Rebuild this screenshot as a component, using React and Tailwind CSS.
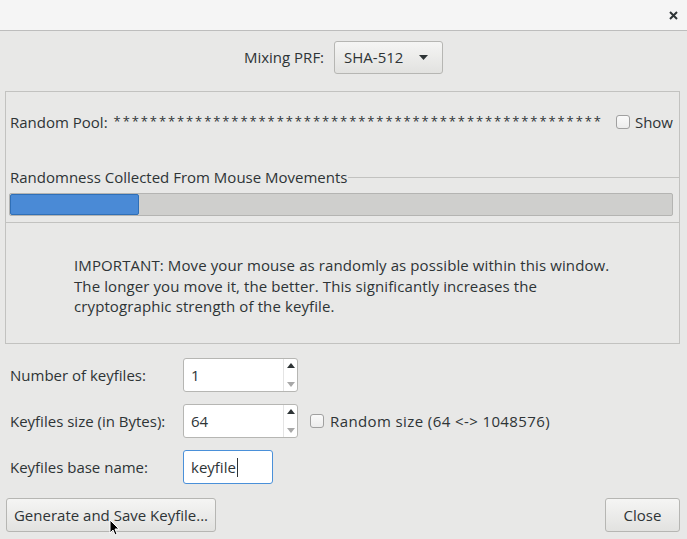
import React from "react";

const font = { fontFamily: '"Open Sans", "Noto Sans", sans-serif' };

const SpinBox = ({ value }) => (
    <div className="flex h-[34px] w-[115px] rounded-[3px] border border-[#b6b6b3] bg-white">
        <div className="flex flex-1 items-center pl-[7px] text-[15px]">{value}</div>
        <div className="flex w-[14px] flex-col items-center justify-between py-[4px] border-l border-[#e4e4e4]">
            <svg width="8" height="6" viewBox="0 0 8 6"><path d="M0 5 L4 0 L8 5 Z" fill="#2e3436" /></svg>
            <svg width="8" height="6" viewBox="0 0 8 6"><path d="M0 1 L4 6 L8 1 Z" fill="#a8a8a8" /></svg>
        </div>
    </div>
);

const CheckBox = () => (
    <div className="h-[14px] w-[14px] rounded-[3px] border border-[#a0a0a0] bg-gradient-to-b from-[#fafafa] to-[#ececec]" />
);

const Button = ({ children, className }) => (
    <div className={"flex h-[34px] items-center justify-center rounded-[3px] border border-[#b6b6b3] bg-gradient-to-b from-[#f5f5f4] to-[#e2e2e0] text-[15px] " + className}>
        {children}
    </div>
);

export default function App() {
    return (
        <div className="relative h-[539px] w-[687px] overflow-hidden bg-[#e8e8e7] text-[#2e3436]" style={font}>
            {/* title bar */}
            <div className="flex h-[31px] items-center justify-end border-b border-[#bdbdbd] bg-[#f5f5f5] pr-[9px]">
                <svg width="9" height="9" viewBox="0 0 9 9"><path d="M1 1 L8 8 M8 1 L1 8" stroke="#2e3436" strokeWidth="2" /></svg>
            </div>

            {/* mixing prf */}
            <div className="mt-[10px] flex items-center justify-center gap-[10px]">
                <span className="text-[15px]">Mixing PRF:</span>
                <div className="flex h-[33px] w-[109px] items-center justify-between rounded-[3px] border border-[#b6b6b3] bg-gradient-to-b from-[#f5f5f4] to-[#e2e2e0] pl-[9px] pr-[14px] text-[15px]">
                    <span>SHA-512</span>
                    <svg width="9" height="5" viewBox="0 0 9 5"><path d="M0 0 L9 0 L4.5 5 Z" fill="#2e3436" /></svg>
                </div>
            </div>

            {/* random pool frame */}
            <div className="ml-[5px] mr-[7px] mt-[17px] h-[253px] border border-[#c2c2c0]">
                <div className="mt-[19px] flex h-[22px] items-center pl-[4px] pr-[6px] text-[15px]">
                    <span>Random Pool:</span>
                    <span className="ml-[6px] flex-1 tracking-[1.9px] text-[13px]">
                        ******************************************************
                    </span>
                    <CheckBox />
                    <span className="ml-[5px]">Show</span>
                </div>

                <div className="mt-[34px]">
                    <div className="flex items-center">
                        <span className="pl-[4px] text-[15px] leading-[20px]">Randomness Collected From Mouse Movements</span>
                        <div className="h-px flex-1 bg-[#c2c2c0]" />
                    </div>
                    <div className="border-b border-[#c2c2c0] pb-[6px] pl-[3px] pr-[6px] pt-[6px]">
                        <div className="h-[23px] rounded-[2px] border border-[#b4b4b2] bg-[#cfcfcd]">
                            <div className="h-full w-[129px] rounded-[2px] border border-[#2f6fb7] bg-[#4a8ad6]" />
                        </div>
                    </div>
                </div>

                <div className="mt-[32px] pl-[68px] text-[15px] leading-[20.5px] tracking-[0.1px]">
                    <p>IMPORTANT: Move your mouse as randomly as possible within this window.</p>
                    <p>The longer you move it, the better. This significantly increases the</p>
                    <p>cryptographic strength of the keyfile.</p>
                </div>
            </div>

            {/* form */}
            <div className="mt-[14px] flex flex-col gap-[12px] pl-[10px] text-[15px]">
                <div className="flex items-center">
                    <span className="w-[173px]">Number of keyfiles:</span>
                    <SpinBox value="1" />
                </div>
                <div className="flex items-center">
                    <span className="w-[173px]">Keyfiles size (in Bytes):</span>
                    <SpinBox value="64" />
                    <div className="ml-[12px] flex items-center gap-[6px]">
                        <CheckBox />
                        <span className="tracking-[0.4px]">Random size (64 &lt;-&gt; 1048576)</span>
                    </div>
                </div>
                <div className="flex items-center">
                    <span className="w-[173px]">Keyfiles base name:</span>
                    <div className="flex h-[34px] w-[90px] items-center rounded-[3px] border border-[#4a90d9] bg-white pl-[7px]">
                        <span>keyfile</span>
                        <span className="ml-px h-[19px] w-px bg-[#2e3436]" />
                    </div>
                </div>
            </div>

            {/* buttons */}
            <div className="mt-[14px] flex items-center justify-between pl-[6px] pr-[7px]">
                <Button className="w-[210px]">Generate and Save Keyfile...</Button>
                <Button className="w-[75px]">Close</Button>
            </div>

            {/* mouse pointer */}
            <svg className="absolute left-[109px] top-[519px]" width="11" height="17" viewBox="0 0 11 17">
                <path d="M1 1 L1 14 L4 11 L6 16 L8 15 L6 10 L10 10 Z" fill="#000" stroke="#fff" strokeWidth="1" />
            </svg>
        </div>
    );
}
